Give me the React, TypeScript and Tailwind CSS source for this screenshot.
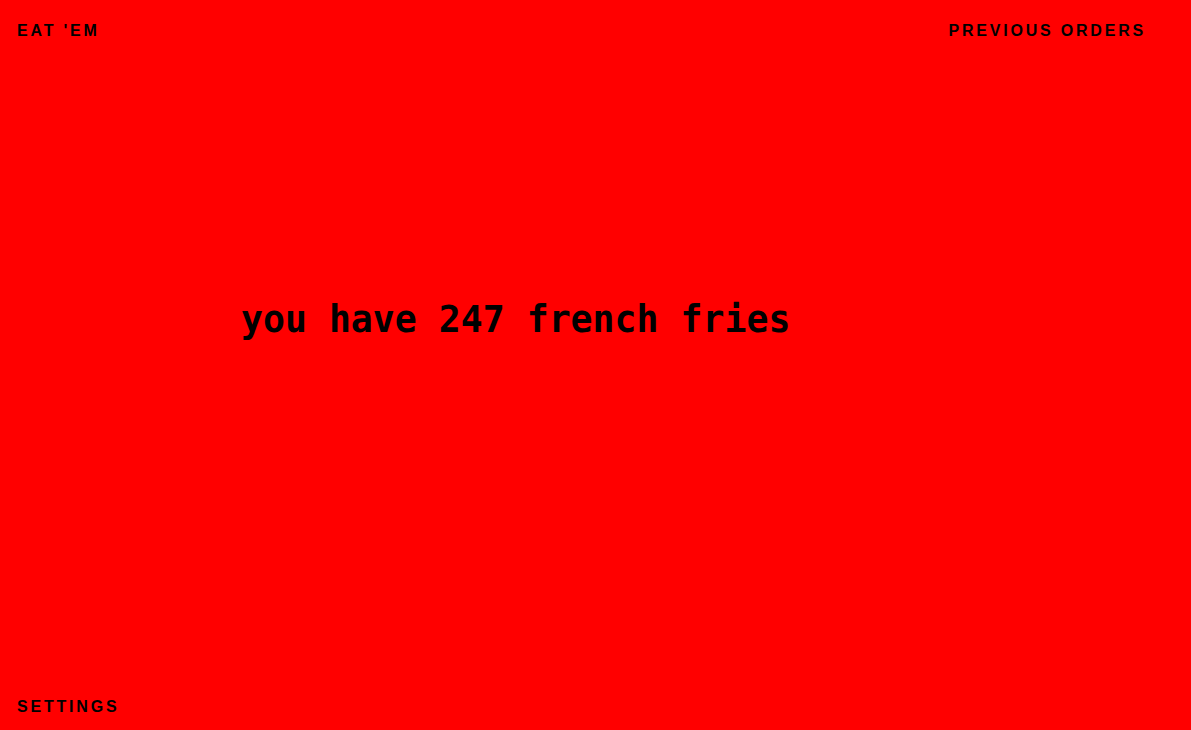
export default function App() {
  return (
    <div className="flex h-[730px] w-full flex-col bg-[#ff0000] text-black">
      <header className="flex items-center justify-between pl-[17px] pr-[45px] pt-[19px] font-['Liberation_Sans',Arial,sans-serif] text-[16px] font-bold uppercase tracking-[2.8px]">
        <span>Eat 'em</span>
        <span>Previous orders</span>
      </header>
      <main className="flex flex-1 items-center pl-[241px] pb-[98px]">
        <h1 className="font-['DejaVu_Sans_Mono',monospace] text-[36.5px] font-bold">
          you have 247 french fries
        </h1>
      </main>
      <footer className="pl-[17px] pb-[11px] font-['Liberation_Sans',Arial,sans-serif] text-[16px] font-bold uppercase tracking-[2.8px]">
        Settings
      </footer>
    </div>
  );
}
